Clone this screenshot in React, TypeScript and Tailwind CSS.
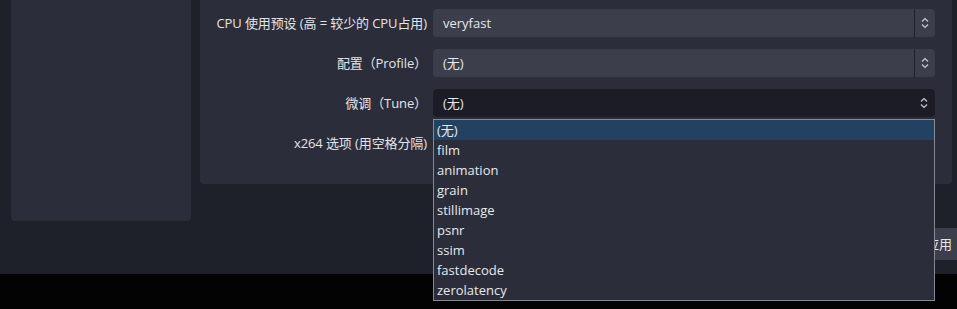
import React from "react";

const font = { fontFamily: '"Open Sans", "Noto Sans CJK SC", sans-serif' };

function Chevrons() {
  return (
    <svg width="8" height="12" viewBox="0 0 8 12" className="block">
      <polyline points="1,4.5 4,1.5 7,4.5" fill="none" stroke="#c9cbd1" strokeWidth="1.2" />
      <polyline points="1,7.5 4,10.5 7,7.5" fill="none" stroke="#c9cbd1" strokeWidth="1.2" />
    </svg>
  );
}

function Combo({ value, focused }: { value: string; focused?: boolean }) {
  return (
    <div
      className={
        "flex h-[28px] w-[502px] items-center rounded-[4px] " +
        (focused ? "bg-[#1b1c26]" : "bg-[#3c3f4b]")
      }
    >
      <div className="flex-1 pl-[10px] pt-[2px] text-[13px] text-[#e6e7ea]">{value}</div>
      {focused ? (
        <div className="mr-[1px] flex h-full w-[20px] items-center justify-center">
          <Chevrons />
        </div>
      ) : (
        <div className="flex h-full w-[21px] items-center justify-center border-l border-[#1f212a]">
          <Chevrons />
        </div>
      )}
    </div>
  );
}

function Row({ label, children }: { label: string; children: React.ReactNode }) {
  return (
    <div className="flex h-[28px] items-center gap-[6px]">
      <div className="w-[227px] whitespace-nowrap pt-[2px] text-right text-[13px] tracking-[-0.1px] text-[#e3e4e8]">
        {label}
      </div>
      {children}
    </div>
  );
}

const items = [
  "(无)",
  "film",
  "animation",
  "grain",
  "stillimage",
  "psnr",
  "ssim",
  "fastdecode",
  "zerolatency",
];

export default function App() {
  return (
    <div className="flex h-[309px] w-[957px] flex-col bg-[#030303]" style={font}>
      <div className="flex h-[274px] gap-[9px] bg-[#1f212a] pl-[11px]">
        <div className="h-[221px] w-[180px] rounded-b-[4px] bg-[#2b2d3a]" />
        <div className="flex w-[757px] flex-col">
          <div className="relative h-[184px] w-[752px] rounded-b-[4px] bg-[#2b2d3a]">
            <div className="flex flex-col gap-[12px] pt-[9px]">
              <Row label="CPU 使用预设 (高 = 较少的 CPU占用)">
                <Combo value="veryfast" />
              </Row>
              <Row label="配置（Profile）">
                <Combo value="(无)" />
              </Row>
              <Row label="微调（Tune）">
                <Combo value="(无)" focused />
              </Row>
              <Row label="x264 选项 (用空格分隔)">
                <div className="h-[28px] w-[502px] rounded-[4px] bg-[#1b1c26]" />
              </Row>
            </div>
            <div className="absolute left-[233px] top-[119px] z-10 w-[502px] border border-[#868992] bg-[#2b2d3a]">
              {items.map((it, i) => (
                <div
                  key={it}
                  className={
                    "flex h-[20px] items-center pl-[3px] pt-[2px] text-[13px] text-[#e8e9ec] " +
                    (i === 0 ? "bg-[#234161]" : "")
                  }
                >
                  {it}
                </div>
              ))}
            </div>
          </div>
          <div className="mt-[44px] flex justify-end">
            <div className="flex h-[32px] w-[60px] items-center justify-end rounded-l-[4px] bg-[#3c3f4b] pr-[5px] pt-[2px] text-[13px] text-[#e6e7ea]">
              应用
            </div>
          </div>
        </div>
      </div>
    </div>
  );
}
